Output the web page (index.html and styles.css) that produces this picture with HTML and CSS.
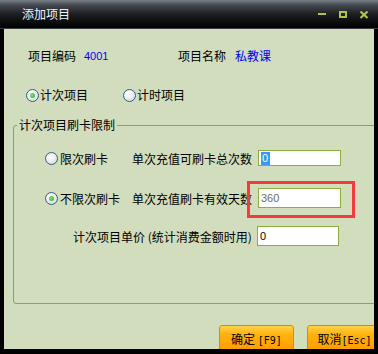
FILE: index.html
```html
<!DOCTYPE html>
<html lang="zh-CN">
<head>
  <meta charset="UTF-8">
  <title>添加项目</title>
  <link rel="stylesheet" href="styles.css">
</head>
<body>
  <div class="window">
    <div class="titlebar">
      <span class="title">添加项目</span>
      <svg class="controls" width="50" height="8" viewBox="0 0 50 8">
        <rect x="0" y="2" width="8" height="2" fill="#abc83f"/>
        <rect x="22" y="1" width="6" height="5" fill="none" stroke="#abc83f" stroke-width="2"/>
        <path d="M42.5 0.5 L49.5 7 M49.5 0.5 L42.5 7" stroke="#abc83f" stroke-width="2.2" fill="none"/>
      </svg>
    </div>

    <div class="client">
      <div class="row info">
        <span class="code-label">项目编码</span>
        <span class="code-value">4001</span>
        <span class="name-label">项目名称</span>
        <span class="name-value">私教课</span>
      </div>

      <div class="row kinds">
        <label class="radio-item kind-count"><span class="radio checked"></span>计次项目</label>
        <label class="radio-item"><span class="radio"></span>计时项目</label>
      </div>

      <fieldset class="group">
        <legend>计次项目刷卡限制</legend>
        <div class="line line-a">
          <label class="radio-item opt"><span class="radio"></span>限次刷卡</label>
          <span class="hint">单次充值可刷卡总次数</span>
          <div class="edit short"><span class="sel">0</span></div>
        </div>
        <div class="line line-b">
          <label class="radio-item opt"><span class="radio checked"></span>不限次刷卡</label>
          <span class="hint">单次充值刷卡有效天数</span>
          <div class="edit gray">360</div>
        </div>
        <div class="line line-c">
          <span class="price-label">计次项目单价 (统计消费金额时用)</span>
          <div class="edit price">0</div>
        </div>
      </fieldset>

      <div class="buttons">
        <button class="btn">确定 <span class="key">[F9]</span></button>
        <button class="btn">取消<span class="key">[Esc]</span></button>
      </div>
    </div>

    <div class="mark"></div>
  </div>
</body>
</html>
```

FILE: styles.css
```css
* {
  margin: 0;
  padding: 0;
  box-sizing: border-box;
}

body {
  font-family: "Noto Sans CJK SC", sans-serif;
  font-size: 12px;
  color: #000;
  background: #000;
  width: 378px;
  height: 354px;
  overflow: hidden;
}

.window {
  position: relative;
  width: 378px;
  height: 354px;
  display: flex;
  flex-direction: column;
  background: #000;
}

/* title bar */
.titlebar {
  flex: none;
  height: 29px;
  display: flex;
  align-items: center;
  padding: 0 10px 0 22px;
  background: linear-gradient(#7a8087 0, #454a50 5px, #1c1f23 14px, #07080a 24px, #000 28px);
  border-bottom: 1px solid #3a3e42;
}

.title {
  color: #eef4ff;
  font-size: 12px;
  line-height: 14px;
}

.controls {
  margin-left: auto;
  align-self: flex-start;
  margin-top: 11px;
}

/* client area */
.client {
  flex: 1;
  margin: 0 4px 5px;
  background: #d1ddbd;
  overflow: hidden;
  padding-top: 19px;
}

.row {
  display: flex;
  align-items: center;
  height: 16px;
  line-height: 16px;
  white-space: nowrap;
}

.info {
  padding-left: 24px;
}

.code-label {
  width: 56px;
}

.code-value {
  width: 94px;
  color: #0000ff;
  font-family: "Liberation Sans", sans-serif;
  font-size: 11px;
}

.name-label {
  width: 57px;
}

.name-value {
  color: #0000ff;
}

.kinds {
  margin-top: 23px;
  padding-left: 22px;
}

.radio-item {
  display: flex;
  align-items: center;
  gap: 1px;
}

.kind-count {
  width: 97px;
}

.radio {
  flex: none;
  width: 13px;
  height: 13px;
  border-radius: 50%;
  border: 1px solid #36608f;
  background: radial-gradient(circle at 40% 35%, #ffffff 0, #eceeef 45%, #c6cacf 100%);
  display: flex;
  align-items: center;
  justify-content: center;
}

.radio.checked::after {
  content: "";
  width: 5px;
  height: 5px;
  border-radius: 50%;
  background: radial-gradient(circle at 40% 40%, #7ee87e 0, #22a322 100%);
}

/* group box */
.group {
  margin: 15px 0 0 9px;
  width: 380px;
  border: 1px solid #88a93d;
  border-radius: 3px;
  padding: 16px 0 57px 3px;
}

.group legend {
  padding: 0 2px;
  font-size: 12px;
  line-height: 14px;
}

.line {
  display: flex;
  align-items: center;
  height: 20px;
  white-space: nowrap;
}

.line-a {
  padding-left: 28px;
}

.line-b {
  margin-top: 20px;
  padding-left: 28px;
}

.line-c {
  margin-top: 18px;
  padding-left: 56px;
}

.opt {
  width: 87px;
  gap: 2px;
}

.hint {
  width: 126px;
}

.price-label {
  width: 184px;
}

.edit {
  flex: none;
  width: 83px;
  height: 20px;
  background: #fff;
  border: 1px solid #8cae3a;
  padding-left: 2px;
  display: flex;
  align-items: center;
  font-family: "Liberation Sans", sans-serif;
  font-size: 11px;
}

.edit.short {
  height: 16px;
}

.edit.gray {
  color: #6a6a6a;
}

.edit.price {
  width: 82px;
}

.sel {
  background: #3399ff;
  color: #fff;
  padding: 0 1px;
  line-height: 13px;
  border-right: 1px solid #d9740a;
}

/* buttons */
.buttons {
  display: flex;
  gap: 13px;
  margin-top: 21px;
  padding-left: 215px;
}

.btn {
  flex: none;
  width: 75px;
  height: 26px;
  border: 1px solid #de8a00;
  border-radius: 3px;
  background: linear-gradient(#ffd24a 0, #ffb20d 35%, #ff9c00 100%);
  font-family: "Noto Sans CJK SC", sans-serif;
  font-size: 12px;
  color: #000;
  white-space: nowrap;
}

.key {
  font-family: "DejaVu Sans Mono", monospace;
  font-size: 10px;
}

/* red annotation */
.mark {
  position: absolute;
  left: 247px;
  top: 181px;
  width: 108px;
  height: 37px;
  border: 3px solid #f03c3c;
}
```
